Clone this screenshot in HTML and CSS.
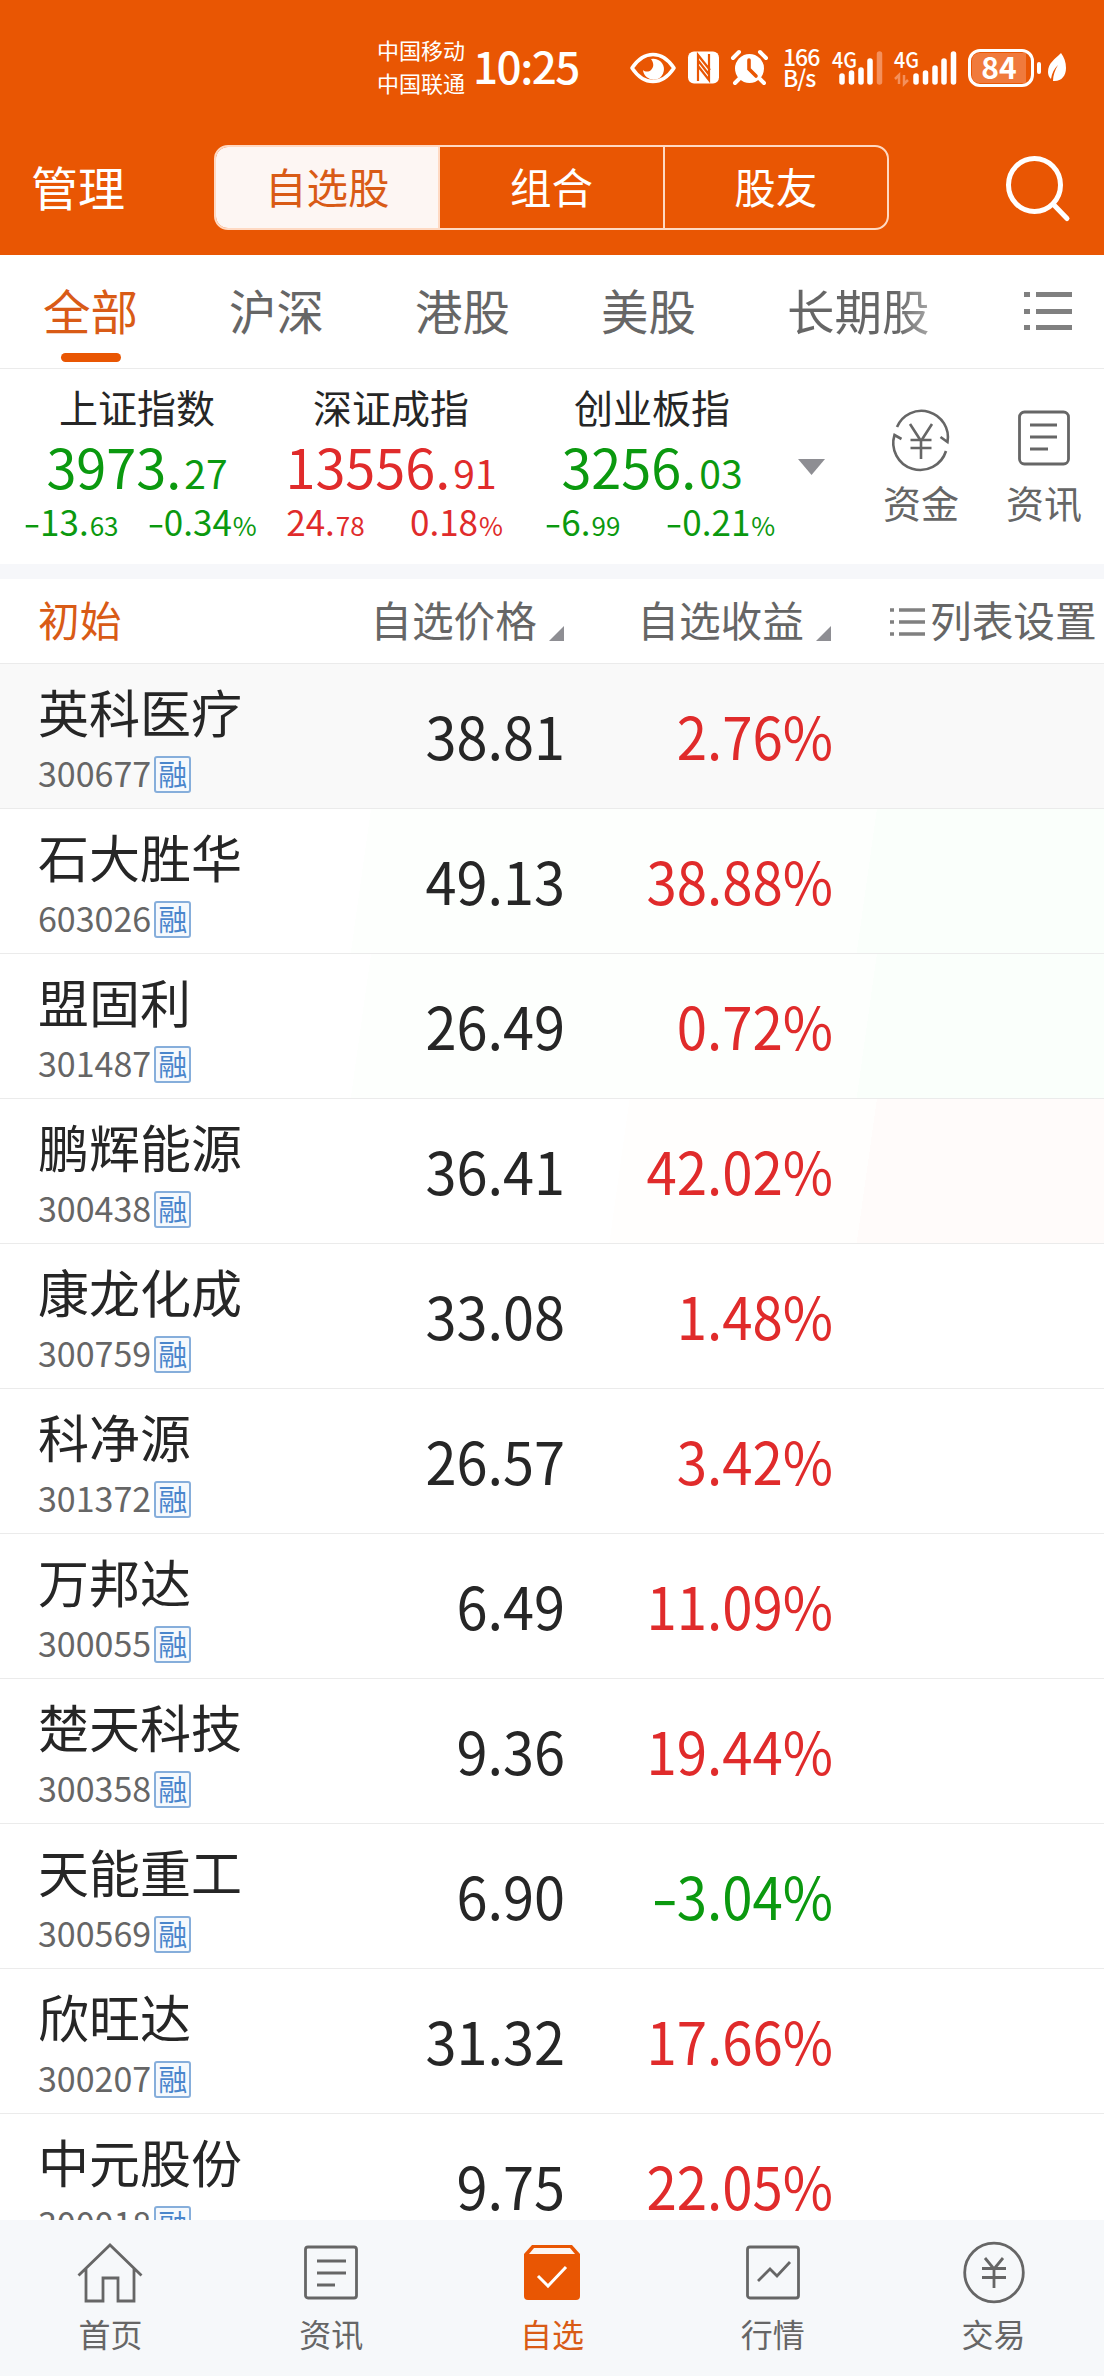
FILE: index.html
```html
<!doctype html>
<html lang='zh-CN'>
  <head>
    <meta charset='utf-8'>
    <title>自选股</title>
    <link rel="stylesheet" href="styles.css">
  </head>
  <body>

    <div id='header'>
      <div class='status'>
        <div class='carriers'>中国移动<br>中国联通</div>
        <div class='time'>10:25</div>
        <svg class='eye' width='46' height='32' viewBox='0 0 46 32'>
          <path d='M2 16C8 7 15 2.500 23 2.500S38 7 44 16C38 25 31 29.500 23 29.500S8 25 2 16Z' fill='none' stroke='#fff' stroke-width='3.600' stroke-linejoin='round'/>
          <path d='M21 7a10.500 10.500 0 1 1-8 11c2 2 6 2 8 0 3-3 3-7 0-11z' fill='#fff'/>
        </svg>
        <svg class='nfc' width='31' height='33' viewBox='0 0 31 33'>
          <rect x='0' y='0.500' width='31' height='32' rx='6' fill='#fff'/>
          <path d='M10 30V4l12 15M21 3v26L10 15M10 9.500l11 14' fill='none' stroke='#e95603' stroke-width='2.200'/>
        </svg>
        <svg class='alarm' width='37' height='34' viewBox='0 0 37 34'>
          <circle cx='18.500' cy='17.500' r='14.500' fill='#fff'/>
          <path d='M2 7l6-6M35 7l-6-6M8 28l-4 4M29 28l4 4' stroke='#fff' stroke-width='4' stroke-linecap='round'/>
          <path d='M18 9v9l7 7' fill='none' stroke='#e95603' stroke-width='3.600' stroke-linecap='round'/>
        </svg>
        <div class='speed'>166<br>B/s</div>
        <svg class='signal' width='52' height='36' viewBox='0 0 52 36'>
          <text x='0' y='18' class='net' textLength='25' lengthAdjust='spacingAndGlyphs'>4G</text>
          <path d='M10 26v6M19.500 23v9M29 20v12M38 11v21' stroke='#fff' stroke-width='5.500' stroke-linecap='round'/>
          <path d='M47.500 4v28' stroke='#f4905c' stroke-width='5.500' stroke-linecap='round'/>
        </svg>
        <svg class='signal two' width='64' height='36' viewBox='0 0 64 36'>
          <text x='0' y='18' class='net' textLength='25' lengthAdjust='spacingAndGlyphs'>4G</text>
          <path d='M5 34V25l-4 4M10 25v9l4-4' fill='none' stroke='#f4905c' stroke-width='2.500'/>
          <path d='M22 26v6M31.500 23v9M41 18v14M50 11v21M59.500 4v28' stroke='#fff' stroke-width='5.500' stroke-linecap='round'/>
        </svg>
        <div class='battery'><span>84</span></div>
        <div class='nub'></div>
        <svg class='leaf' width='18' height='29' viewBox='0 0 18 29'>
          <path d='M13 0C7 6 0 10 0 19c0 3 1 5 3 7 1-6 3-10 7-14-3 5-5 10-5 16 8 1 13-5 13-13 0-6-2-11-5-15z' fill='#fff'/>
        </svg>
      </div>

      <div class='nav'>
        <div class='manage'>管理</div>
        <div class='segment'>
          <div class='active'>自选股</div>
          <div>组合</div>
          <div>股友</div>
        </div>
        <svg class='search' width='64' height='66' viewBox='0 0 64 66'>
          <ellipse cx='28.500' cy='29' rx='26' ry='26.500' fill='none' stroke='#fff' stroke-width='5'/>
          <path d='M47 48l14 14.500' stroke='#fff' stroke-width='5' stroke-linecap='round'/>
        </svg>
      </div>
    </div>

    <div class='tabs'>
      <div class='tab on'>全部</div>
      <div class='tab'>沪深</div>
      <div class='tab'>港股</div>
      <div class='tab'>美股</div>
      <div class='tab last'>长期股</div>
      <svg width='48' height='40' viewBox='0 0 48 40'>
        <path d='M0 2.500h6M12 2.500h36M0 19.500h6M12 19.500h36M0 35.500h6M12 35.500h36' stroke='#808080' stroke-width='5'/>
      </svg>
    </div>

    <div class='indices'>
      <div class='index green'>
        <div class='title'>上证指数</div>
        <div class='big'>3973.<small>27</small></div>
        <div class='sub'><span><em>-</em>13.<small>63</small></span><span><em>-</em>0.34<small>%</small></span></div>
      </div>
      <div class='index red'>
        <div class='title'>深证成指</div>
        <div class='big'>13556.<small>91</small></div>
        <div class='sub'><span>24.<small>78</small></span><span>0.18<small>%</small></span></div>
      </div>
      <div class='index green wide'>
        <div class='title'>创业板指</div>
        <div class='big'>3256.<small>03</small></div>
        <div class='sub'><span><em>-</em>6.<small>99</small></span><span><em>-</em>0.21<small>%</small></span></div>
      </div>
      <svg class='down' width='27' height='16' viewBox='0 0 27 16'><path d='M0 0h27L13.500 16z' fill='#8e8e93'/></svg>
      <div class='tool'>
        <svg width='58' height='58' viewBox='0 0 58 58' fill='none' stroke='#666' stroke-width='2.600'>
          <path d='M5 18A26.500 26.500 0 0 1 55.500 33l-7-5M54 42A26.500 26.500 0 0 1 2.500 26l7 4'/>
          <path d='M18 15l11 17 11-17M29 32v18M18.500 31h21M18.500 39h21'/>
        </svg>
        资金
      </div>
      <div class='tool'>
        <svg width='52' height='58' viewBox='0 0 52 58' fill='none' stroke='#666' stroke-width='2.800'>
          <rect x='1.500' y='3' width='49' height='52' rx='5'/>
          <path d='M12 16h27M12 28h27M12 40h18'/>
        </svg>
        资讯
      </div>
    </div>

    <div class='columns'>
      <div class='initial'>初始</div>
      <div class='sort price-col'>自选价格<i></i></div>
      <div class='sort gain-col'>自选收益<i></i></div>
      <div class='setting'>
        <svg width='36' height='30' viewBox='0 0 36 30'>
          <path d='M0 3h4M9 3h26M0 15h4M9 15h26M0 27h4M9 27h26' stroke='#808080' stroke-width='3.500'/>
        </svg>列表设置
      </div>
    </div>

    <div id='list'>
      <div class='row pressed'>
        <div class='stock'><div class='name'>英科医疗</div><div class='code'>300677<b>融</b></div></div>
        <div class='price'>38.81</div><div class='gain red'>2.76%</div>
      </div>
      <div class='row fall'>
        <div class='stock'><div class='name'>石大胜华</div><div class='code'>603026<b>融</b></div></div>
        <div class='price'>49.13</div><div class='gain red'>38.88%</div>
      </div>
      <div class='row fall'>
        <div class='stock'><div class='name'>盟固利</div><div class='code'>301487<b>融</b></div></div>
        <div class='price'>26.49</div><div class='gain red'>0.72%</div>
      </div>
      <div class='row rise'>
        <div class='stock'><div class='name'>鹏辉能源</div><div class='code'>300438<b>融</b></div></div>
        <div class='price'>36.41</div><div class='gain red'>42.02%</div>
      </div>
      <div class='row'>
        <div class='stock'><div class='name'>康龙化成</div><div class='code'>300759<b>融</b></div></div>
        <div class='price'>33.08</div><div class='gain red'>1.48%</div>
      </div>
      <div class='row'>
        <div class='stock'><div class='name'>科净源</div><div class='code'>301372<b>融</b></div></div>
        <div class='price'>26.57</div><div class='gain red'>3.42%</div>
      </div>
      <div class='row'>
        <div class='stock'><div class='name'>万邦达</div><div class='code'>300055<b>融</b></div></div>
        <div class='price'>6.49</div><div class='gain red'>11.09%</div>
      </div>
      <div class='row'>
        <div class='stock'><div class='name'>楚天科技</div><div class='code'>300358<b>融</b></div></div>
        <div class='price'>9.36</div><div class='gain red'>19.44%</div>
      </div>
      <div class='row'>
        <div class='stock'><div class='name'>天能重工</div><div class='code'>300569<b>融</b></div></div>
        <div class='price'>6.90</div><div class='gain green'><em>-</em>3.04%</div>
      </div>
      <div class='row'>
        <div class='stock'><div class='name'>欣旺达</div><div class='code'>300207<b>融</b></div></div>
        <div class='price'>31.32</div><div class='gain red'>17.66%</div>
      </div>
      <div class='row'>
        <div class='stock'><div class='name'>中元股份</div><div class='code'>300018<b>融</b></div></div>
        <div class='price'>9.75</div><div class='gain red'>22.05%</div>
      </div>
    </div>

    <div id='footer'>
      <div class='item'>
        <svg width='66' height='64' viewBox='0 0 66 64' fill='none' stroke='#666' stroke-width='2.800'>
          <path d='M1.500 35.500L33 5l31.500 30.500M9 29v32h17V38h15v23h16V29'/>
        </svg>
        首页
      </div>
      <div class='item'>
        <svg width='54' height='64' viewBox='0 0 54 64' fill='none' stroke='#666' stroke-width='2.800'>
          <rect x='1.500' y='7' width='51' height='51' rx='2.500'/>
          <path d='M13 21h29M13 33h29M13 45h18'/>
        </svg>
        资讯
      </div>
      <div class='item current'>
        <svg width='56' height='64' viewBox='0 0 56 64'>
          <path d='M8 5h40l8 9V56q0 4-4 4H4q-4 0-4-4V14z' fill='#e95603'/>
          <path d='M10 8h36l5 6H5z' fill='#fdf6f2'/>
          <path d='M14 36l10 10 18-19' fill='none' stroke='#fff' stroke-width='3'/>
        </svg>
        自选
      </div>
      <div class='item'>
        <svg width='54' height='64' viewBox='0 0 54 64' fill='none' stroke='#666' stroke-width='2.800'>
          <rect x='1.500' y='7' width='51' height='51' rx='2.500'/>
          <path d='M12 41l12-12 7 7 13-14'/>
        </svg>
        行情
      </div>
      <div class='item'>
        <svg width='62' height='64' viewBox='0 0 62 64' fill='none' stroke='#666' stroke-width='2.800'>
          <circle cx='31' cy='32.500' r='29.300'/>
          <path d='M22 18l9 11 9-11M31 28v20M19 28.500h24M19 37.500h24'/>
        </svg>
        交易
      </div>
    </div>

  </body>
</html>
```
FILE: styles.css
```css
* {
  box-sizing: border-box;
}

body {
  font-family: 'Noto Sans CJK SC', sans-serif;
  margin: 0;
  width: 1104px;
  height: 2376px;
  overflow: hidden;
  display: flex;
  flex-direction: column;
  background: #fff;
  color: #262626;
}

svg {
  display: block;
  flex: none;
  overflow: visible;
}

/* wider minus sign */
em {
  display: inline-block;
  font-style: normal;
  line-height: 1;
  transform: scaleX(1.4);
  margin: 0 .05em;
}

.red {
  color: #e02b2b;
}

.green {
  color: #0b990f;
}

/* header */

#header {
  flex: none;
  height: 255px;
  background: #e95603;
  color: #fff;
}

.status {
  height: 135px;
  padding-left: 377px;
  display: flex;
  align-items: center;
}

.carriers {
  font-size: 22px;
  line-height: 33px;
  width: 96px;
  padding-bottom: 4px;
}

.time {
  font-size: 44px;
  font-weight: 500;
  letter-spacing: -1.500px;
  width: 157px;
  padding-bottom: 6px;
}

.nfc {
  margin-left: 12px;
}

.alarm {
  margin-left: 12px;
}

.speed {
  font-size: 23px;
  line-height: 21px;
  font-weight: 500;
  letter-spacing: -1px;
  width: 49px;
  margin-left: 15px;
  padding-bottom: 1px;
}

.net {
  font: 500 22px 'Noto Sans CJK SC', sans-serif;
  fill: #fff;
}

.signal.two {
  margin-left: 10px;
}

.battery {
  width: 66px;
  height: 38px;
  margin-left: 10px;
  padding: 1px;
  border: 3px solid #fff;
  border-radius: 12px;
}

.battery span {
  display: block;
  width: 54px;
  height: 30px;
  border-radius: 7px 0 0 7px;
  background: #f07a3c;
  font-size: 30px;
  font-weight: 700;
  line-height: 26px;
  text-align: center;
}

.nub {
  width: 4px;
  height: 12px;
  margin: 0 7px 0 3px;
  border-radius: 2px;
  background: #fff;
}

.nav {
  height: 120px;
  padding: 10px 36px 0 31px;
  display: flex;
  align-items: flex-start;
}

.manage {
  width: 183px;
  font-size: 47px;
  line-height: 81px;
}

.segment {
  width: 675px;
  height: 85px;
  display: flex;
  border: 2px solid #ffd9c2;
  border-radius: 14px;
  overflow: hidden;
}

.segment div {
  flex: 1;
  font-size: 41.500px;
  line-height: 78px;
  text-align: center;
}

.segment div + div {
  border-left: 2px solid #ffd9c2;
}

.segment .active {
  background: #fdf6f3;
  color: #d95b16;
}

.search {
  margin: 11px -2px 0 auto;
}

/* tabs */

.tabs {
  flex: none;
  height: 114px;
  padding: 0 32px 0 43px;
  display: flex;
  border-bottom: 1px solid #ebebeb;
  color: #666;
}

.tab {
  width: 186px;
  font-size: 47.500px;
  line-height: 109px;
  height: 113px;
}

.tab.on {
  color: #d95b16;
}

.tab.on:after {
  content: '';
  display: block;
  width: 60px;
  height: 9px;
  margin: -11px 0 0 18px;
  border-radius: 5px;
  background: #e95603;
}

.tab.last {
  width: 145px;
  color: transparent;
  background: linear-gradient(90deg, #666 75%, #aaa);
  -webkit-background-clip: text;
  background-clip: text;
}

.tabs svg {
  margin: 37px 0 0 auto;
}

/* market indices */

.indices {
  flex: none;
  height: 210px;
  padding-left: 10px;
  display: flex;
  border-bottom: 15px solid #f6f7fa;
}

.index {
  width: 254px;
  text-align: center;
  white-space: nowrap;
}

.index.wide {
  width: 268px;
}

.index small {
  line-height: 1;
}

.title {
  height: 67px;
  padding-top: 12px;
  font-size: 39px;
  line-height: 50px;
  color: #262626;
}

.big {
  font-size: 54px;
  line-height: 60px;
  height: 63px;
}

.big small {
  margin-left: 3px;
  font-size: 39px;
}

.sub {
  display: flex;
  margin: 0 -4px;
  font-size: 35px;
  line-height: 44px;
}

.sub span {
  flex: 1;
}

.sub small {
  margin-left: 1px;
  font-size: 26px;
}

.down {
  margin: 90px 46px 0 12px;
}

.tool {
  width: 100px;
  margin-right: 23px;
  padding-top: 40px;
  display: flex;
  flex-direction: column;
  align-items: center;
  font-size: 38px;
  line-height: 50px;
  color: #666;
}

.tool svg {
  margin-bottom: 10px;
}

.tool:last-child {
  margin-right: 0;
}

/* list head */

.columns {
  flex: none;
  height: 85px;
  display: flex;
  border-bottom: 1px solid #ebebeb;
  font-size: 41.700px;
  line-height: 80px;
  color: #666;
}

.initial {
  width: 264px;
  padding-left: 38px;
  color: #d95b16;
}

.sort {
  display: flex;
  justify-content: flex-end;
}

.price-col {
  width: 300px;
}

.gain-col {
  width: 267px;
}

.sort i {
  border-left: 15px solid transparent;
  border-bottom: 15px solid #8e8e93;
  height: 0;
  margin: 47px 0 0 12px;
}

.setting {
  display: flex;
  margin-left: 59px;
  white-space: nowrap;
}

.setting svg {
  margin: 28px 4px 0 0;
}

/* stock list */

#list {
  flex: 1;
  min-height: 0;
  overflow: hidden;
}

.row {
  height: 145px;
  display: flex;
  border-bottom: 1px solid #ebebeb;
}

.row.pressed {
  background: #f9f9f9;
}

.row.fall {
  background: linear-gradient(98deg, #fff 33%, #fdfffd 33% 78%, #fafffb 78%);
}

.row.rise {
  background: linear-gradient(98deg, #fff 56%, #fffefd 56% 78%, #fffbfa 78%);
}

.stock {
  width: 264px;
  padding: 17px 0 0 38px;
}

.name {
  font-size: 51px;
  line-height: 60px;
  white-space: nowrap;
}

.code {
  display: flex;
  margin-top: 15px;
  font-size: 34px;
  line-height: 33px;
  color: #666;
}

.code b {
  width: 37px;
  height: 37px;
  margin-left: 3px;
  border: 2px solid #86aedb;
  border-radius: 3px;
  background: #f5f9fd;
  color: #4a86cc;
  font-size: 29px;
  font-weight: 400;
  line-height: 30px;
  text-align: center;
}

/* figures are set slightly condensed */
.price, .gain {
  font-size: 59px;
  line-height: 141px;
  text-align: right;
  transform: scaleX(.947);
  transform-origin: right;
}

.price {
  width: 301px;
}

.gain {
  width: 268px;
  transform: scaleX(.925);
}

/* bottom bar */

#footer {
  flex: none;
  height: 156px;
  display: flex;
  background: #f6f8fa;
  color: #666;
}

.item {
  flex: 1;
  padding-top: 20px;
  display: flex;
  flex-direction: column;
  align-items: center;
  font-size: 32px;
  line-height: 40px;
}

.item svg {
  margin-bottom: 9px;
}

.current {
  color: #d95b16;
}
```
